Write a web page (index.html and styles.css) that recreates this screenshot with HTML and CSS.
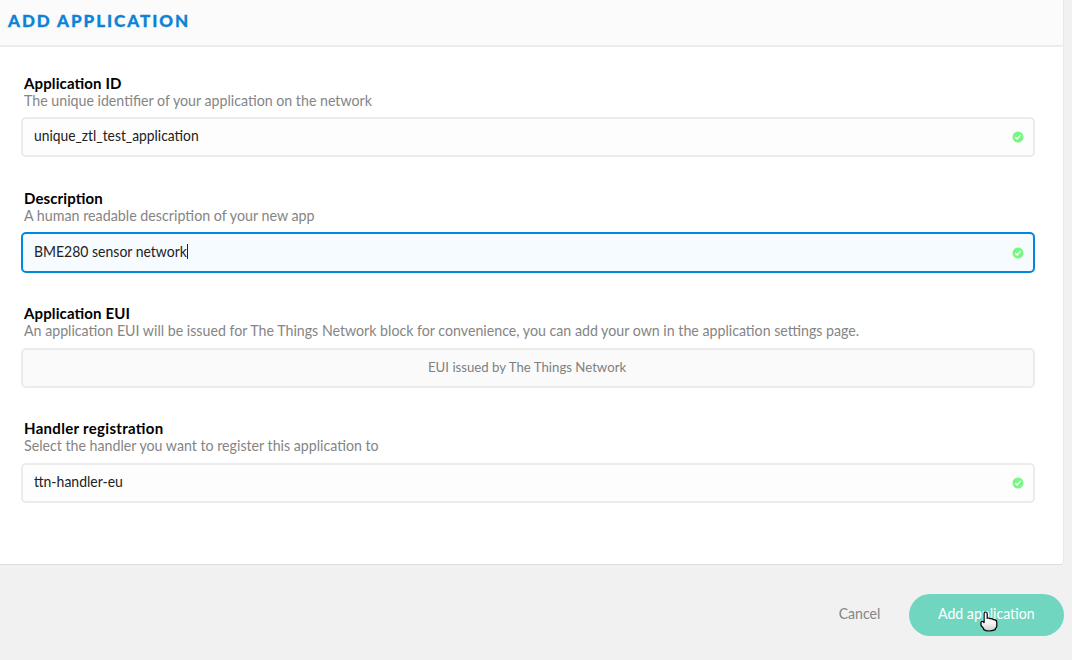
FILE: index.html
```html
<!DOCTYPE html>
<html lang="en">
<head>
<meta charset="utf-8">
<title>Add application</title>
<link rel="stylesheet" href="styles.css">
</head>
<body>
<main class="panel">
  <header class="panel-header"><h1>ADD APPLICATION</h1></header>
  <form class="fields">
    <section class="field">
      <h2>Application ID</h2>
      <p>The unique identifier of your application on the network</p>
      <div class="input identifier"><span>unique_ztl_test_application</span><svg class="check" viewBox="0 0 12 12"><circle cx="6" cy="6" r="5.5"/><path d="M3.3 6.2 5.1 8 8.6 4"/></svg></div>
    </section>
    <section class="field">
      <h2>Description</h2>
      <p class="description">A human readable description of your new app</p>
      <div class="input focused"><span>BME280 sensor network</span><i class="caret"></i><svg class="check" viewBox="0 0 12 12"><circle cx="6" cy="6" r="5.5"/><path d="M3.3 6.2 5.1 8 8.6 4"/></svg></div>
    </section>
    <section class="field lower">
      <h2>Application EUI</h2>
      <p>An application EUI will be issued for The Things Network block for convenience, you can add your own in the application settings page.</p>
      <div class="input issued"><span>EUI issued by The Things Network</span></div>
    </section>
    <section class="field lower">
      <h2 class="handler">Handler registration</h2>
      <p>Select the handler you want to register this application to</p>
      <div class="input region"><span>ttn-handler-eu</span><svg class="check" viewBox="0 0 12 12"><circle cx="6" cy="6" r="5.5"/><path d="M3.3 6.2 5.1 8 8.6 4"/></svg></div>
    </section>
  </form>
</main>
<footer class="actions">
  <a class="cancel">Cancel</a>
  <div class="submit"><span>Add application</span>
    <svg class="cursor" viewBox="0 0 18 21">
      <defs><linearGradient id="hand" x2="0" y2="1"><stop stop-color="#fff"/><stop offset=".6" stop-color="#f4f4f4"/><stop offset="1" stop-color="#ccc"/></linearGradient></defs>
      <path d="M4.1 12V2.8Q4.1 1 5.6 1T7.2 2.8V7.2Q8.8 6.6 10.2 7.8Q12 7.2 13.3 8.6Q16.6 8.4 16.8 11.3V15Q16.8 16.5 15.3 17.6V18.6Q12 20 9 20Q5.5 20 3.6 18.6V17.5L1 14.5V11.4Q1.2 10.3 2.4 10.4Q3.7 10.6 4.1 12Z"/>
    </svg>
  </div>
</footer>
</body>
</html>
```

FILE: styles.css
```css
* { box-sizing: border-box; }
body { margin: 0; height: 660px; overflow: hidden; background: #f1f1f1; font: 15px/17px Lato, sans-serif; color: #222; font-feature-settings: "liga" 1; }
.panel { width: 1064px; height: 565px; background: #fff; border: solid #ddd; border-width: 0 1px 1px 0; border-right-color: #e9e9e9; border-radius: 0 0 4px 0; }
.panel-header { height: 47px; padding: 10px 8px; background: #fbfbfb; border-bottom: 2px solid #ececec; }
h1 { margin: 0; font: 900 17px/22px Lato, sans-serif; letter-spacing: 1.95px; color: #0d83d8; -webkit-text-stroke: .3px #0d83d8; }
.fields { padding: 28px 28px 0 21px; }
.field { height: 115px; }
.field:nth-child(2) .input { height: 41px; }
h2 { margin: 0 3px; font-size: 15px; line-height: 17px; font-weight: 700; letter-spacing: .12px; color: #000; }
.handler { letter-spacing: .31px; }
p { margin: 0 3px 8px; color: #858585; white-space: nowrap; transform: scaleX(.946); transform-origin: left; }
.description { transform: scaleX(.951); }
.lower p { margin-bottom: 9px; }
.input { height: 40px; display: flex; align-items: center; padding: 0 9px 2px 11px; border: 2px solid #ebebeb; border-radius: 5px; background: #fdfdfd; }
.input span { transform: scaleX(.933); transform-origin: left; }
.identifier span { padding-bottom: 2px; transform: scaleX(.922); }
.region span { padding-bottom: 2px; }
.focused { border-color: #0088e0; background: #f6fbff; }
.caret { width: 1px; height: 15px; margin-left: -11px; background: #222; }
.issued { justify-content: center; background: #fafafa; color: #808080; font-size: 14px; padding-bottom: 3px; }
.input.issued span { transform: scaleX(.943); transform-origin: center; margin-right: 3px; }
.check { width: 12px; height: 12px; margin: 2px 0 0 auto; }
.check circle { fill: #75f981; }
.check path { fill: none; stroke: #fff; stroke-width: 1.4; }
.actions { display: flex; justify-content: flex-end; align-items: center; gap: 29px; padding: 29px 8px 0 0; color: #858585; }
.cancel, .submit span { padding-bottom: 3px; transform: scaleX(.94); }
.cancel { transform-origin: right; }
.submit { position: relative; width: 155px; height: 42px; display: flex; align-items: center; justify-content: center; background: #70d6c0; color: #fff; border-radius: 21px; }
.cursor { position: absolute; left: 71px; top: 17px; width: 18px; height: 21px; }
.cursor path { fill: url(#hand); stroke: #000; stroke-width: 1.2; }
```
